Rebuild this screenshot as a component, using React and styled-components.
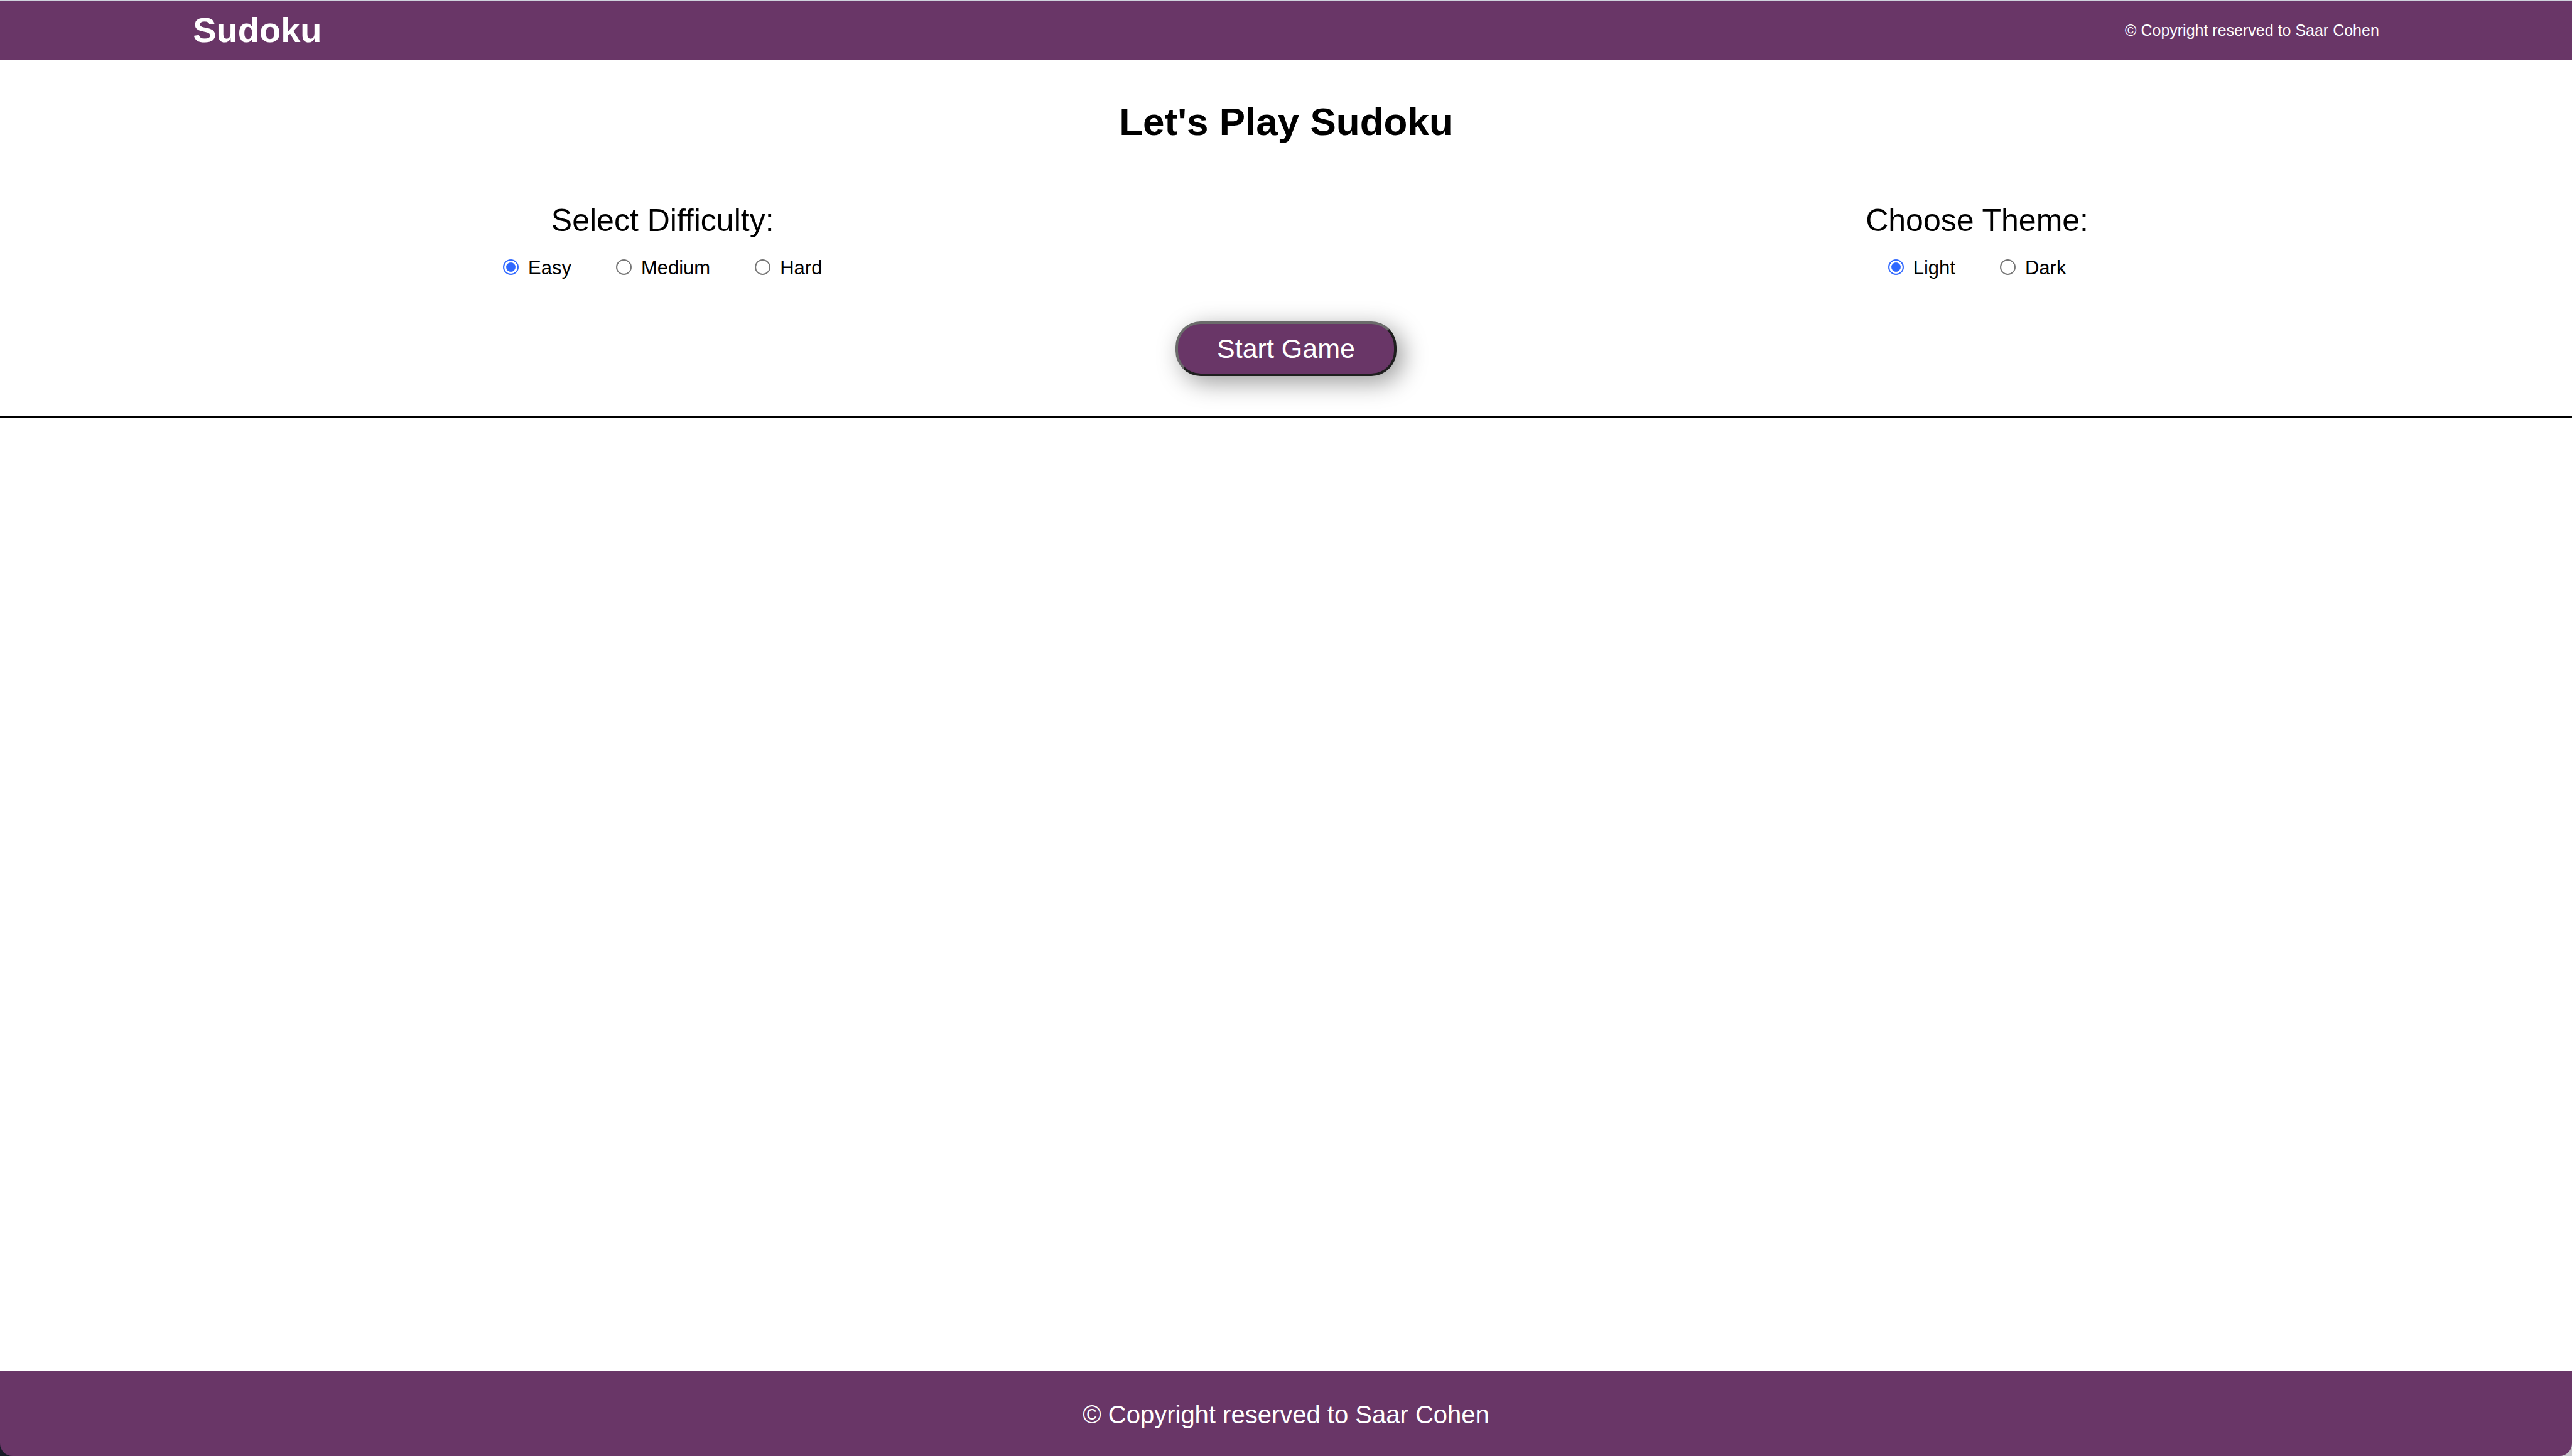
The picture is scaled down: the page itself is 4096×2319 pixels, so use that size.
import React, { useState } from "react";
import styled, { createGlobalStyle } from "styled-components";

const plum = "#693667";

const GlobalStyle = createGlobalStyle`
  * {
    box-sizing: border-box;
  }
  body {
    margin: 0;
    background: #fff;
    color: #000;
    font-family: "Liberation Sans", Helvetica, Arial, sans-serif;
  }
`;

const Page = styled.div`
  display: flex;
  flex-direction: column;
  min-height: 100vh;
`;

const Header = styled.header`
  display: flex;
  align-items: center;
  justify-content: space-between;
  padding: 14px 7.5% 16px;
  border-top: 2px solid #ced2dc;
  background: ${plum};
  color: #fff;
`;

const Brand = styled.h1`
  margin: 0;
  font-size: 56px;
  line-height: 64px;
`;

const HeaderNote = styled.small`
  font-size: 25px;
  line-height: 28px;
`;

const Settings = styled.form`
  display: flex;
  flex-direction: column;
  align-items: center;
  padding: 62px 0 64px;
  border-bottom: 2px solid #000;
`;

const Title = styled.h2`
  margin: 0 0 92px;
  font-size: 62px;
  line-height: 72px;
`;

const Options = styled.div`
  display: flex;
  justify-content: space-between;
  width: 100%;
  margin-bottom: 67px;
  padding: 0 770px 0 801px;
`;

const Group = styled.fieldset`
  display: flex;
  flex-direction: column;
  align-items: center;
  margin: 0;
  padding: 0;
  border: 0;
`;

const GroupTitle = styled.legend`
  margin: 0 auto 29px;
  padding: 0;
  font-size: 50px;
  font-weight: 300;
  line-height: 58px;
`;

const Choices = styled.div`
  display: flex;
  gap: 71px;
`;

const Choice = styled.label`
  display: flex;
  align-items: center;
  gap: 15px;
  font-size: 31px;
  line-height: 36px;
`;

const Radio = styled.input`
  appearance: none;
  width: 25px;
  height: 25px;
  margin: 0 0 4px;
  padding: 3px;
  border: 2px solid #767676;
  border-radius: 50%;
  background: #fff;

  &:checked {
    border-color: #3068ff;
    background: #3068ff content-box;
  }
`;

const StartButton = styled.button`
  padding: 15px 62px 16px;
  border: 4px solid;
  border-color: #6b6b6b #1f1f1f #1f1f1f #6b6b6b;
  border-radius: 40px;
  background: ${plum};
  box-shadow: 10px 10px 39px rgba(0, 0, 0, 0.4);
  color: #fff;
  font-family: inherit;
  font-size: 43px;
  line-height: 48px;
`;

const Board = styled.main`
  flex: 1;
`;

const FooterBacking = styled.div`
  background: linear-gradient(to right, #171c28 50%, #c8c8cc 50%);
`;

const Footer = styled.footer`
  padding: 46px 0 43px;
  border-radius: 0 0 20px 20px;
  background: ${plum};
  color: #fff;
  font-size: 40px;
  line-height: 46px;
  text-align: center;
`;

const notice = "© Copyright reserved to Saar Cohen";

function RadioGroup({ title, name, options, value, onChange }) {
  return (
    <Group>
      <GroupTitle>{title}</GroupTitle>
      <Choices>
        {options.map((option) => (
          <Choice key={option} htmlFor={`${name}-${option}`}>
            <Radio
              type="radio"
              id={`${name}-${option}`}
              name={name}
              value={option}
              checked={value === option}
              onChange={() => onChange(option)}
            />
            {option}
          </Choice>
        ))}
      </Choices>
    </Group>
  );
}

export default function App() {
  const [difficulty, setDifficulty] = useState("Easy");
  const [theme, setTheme] = useState("Light");

  return (
    <>
      <GlobalStyle />
      <Page>
        <Header>
          <Brand>Sudoku</Brand>
          <HeaderNote>{notice}</HeaderNote>
        </Header>
        <Settings onSubmit={(event) => event.preventDefault()}>
          <Title>Let's Play Sudoku</Title>
          <Options>
            <RadioGroup
              title="Select Difficulty:"
              name="difficulty"
              options={["Easy", "Medium", "Hard"]}
              value={difficulty}
              onChange={setDifficulty}
            />
            <RadioGroup
              title="Choose Theme:"
              name="theme"
              options={["Light", "Dark"]}
              value={theme}
              onChange={setTheme}
            />
          </Options>
          <StartButton type="submit">Start Game</StartButton>
        </Settings>
        <Board />
        <FooterBacking>
          <Footer>{notice}</Footer>
        </FooterBacking>
      </Page>
    </>
  );
}
